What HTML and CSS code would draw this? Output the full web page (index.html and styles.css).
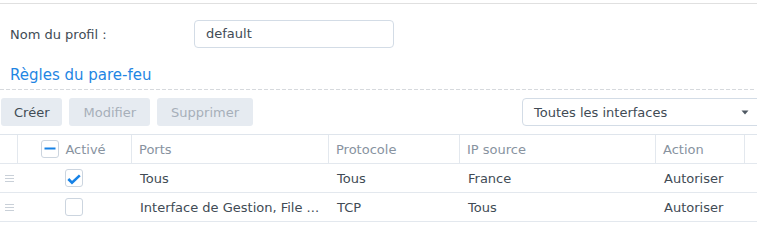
FILE: index.html
```html
<!DOCTYPE html>
<html lang="fr">
<head>
<meta charset="utf-8">
<title>Pare-feu</title>
<link rel="stylesheet" href="styles.css">
</head>
<body>
<div class="topline"></div>
<div class="form-row">
  <label class="form-label" for="profil">Nom du profil :</label>
  <div class="text-input" id="profil">default</div>
</div>
<h2 class="section-title">Règles du pare-feu</h2>
<div class="dashed"></div>
<div class="toolbar">
  <button class="btn">Créer</button>
  <button class="btn disabled">Modifier</button>
  <button class="btn disabled">Supprimer</button>
  <div class="select">
    <span>Toutes les interfaces</span>
    <svg class="caret" width="8" height="5" viewBox="0 0 8 5"><path d="M0.5 0.5 H7.5 L4 4.5 Z" fill="#4f5963"/></svg>
  </div>
</div>
<div class="grid">
  <div class="row head">
    <div class="cell c-handle"></div>
    <div class="cell c-check sep">
      <span class="checkbox">
        <svg width="18" height="18" viewBox="0 0 18 18"><rect x="3.5" y="7.5" width="11" height="2" fill="#1682e6"/></svg>
      </span>
      <span>Activé</span>
    </div>
    <div class="cell sep">Ports</div>
    <div class="cell sep">Protocole</div>
    <div class="cell sep">IP source</div>
    <div class="cell sep">Action</div>
    <div class="cell sep"></div>
  </div>
  <div class="row">
    <div class="cell c-handle"><svg width="9" height="7" viewBox="0 0 9 7"><rect x="0" y="0" width="9" height="1" fill="#c9d0d8"/><rect x="0" y="3" width="9" height="1" fill="#c9d0d8"/><rect x="0" y="6" width="9" height="1" fill="#c9d0d8"/></svg></div>
    <div class="cell c-check">
      <span class="checkbox">
        <svg width="18" height="18" viewBox="0 0 18 18"><path d="M3.3 10 L7 13.6 L14.8 6.4" fill="none" stroke="#1682e6" stroke-width="2.6" stroke-linejoin="miter"/></svg>
      </span>
    </div>
    <div class="cell">Tous</div>
    <div class="cell">Tous</div>
    <div class="cell">France</div>
    <div class="cell">Autoriser</div>
    <div class="cell"></div>
  </div>
  <div class="row">
    <div class="cell c-handle"><svg width="9" height="7" viewBox="0 0 9 7"><rect x="0" y="0" width="9" height="1" fill="#c9d0d8"/><rect x="0" y="3" width="9" height="1" fill="#c9d0d8"/><rect x="0" y="6" width="9" height="1" fill="#c9d0d8"/></svg></div>
    <div class="cell c-check">
      <span class="checkbox"></span>
    </div>
    <div class="cell">Interface de Gestion, File ...</div>
    <div class="cell">TCP</div>
    <div class="cell">Tous</div>
    <div class="cell">Autoriser</div>
    <div class="cell"></div>
  </div>
</div>
</body>
</html>
```

FILE: styles.css
```css
html, body {
  margin: 0;
  padding: 0;
  background: #ffffff;
  overflow: hidden;
}
body {
  font-family: "DejaVu Sans", Verdana, sans-serif;
  font-size: 13px;
  color: #414b55;
  width: 757px;
}
.topline {
  margin-top: 3px;
  height: 1px;
  background: #e0e0e0;
}
.form-row {
  display: flex;
  align-items: center;
  margin-top: 16px;
  padding-left: 10px;
  height: 28px;
}
.form-label {
  width: 184px;
  height: 28px;
  line-height: 30px;
}
.text-input {
  box-sizing: border-box;
  width: 200px;
  height: 28px;
  line-height: 26px;
  border: 1px solid #d3dce6;
  border-radius: 4px;
  padding-left: 11px;
}
.section-title {
  margin: 17px 0 0 0;
  padding-left: 10px;
  font-size: 15px;
  font-weight: normal;
  line-height: 20px;
  color: #1f86e3;
}
.dashed {
  margin-top: 4px;
  width: 755px;
  height: 1px;
  background: repeating-linear-gradient(to right, #d6d9dd 0 4px, transparent 4px 6px);
}
.toolbar {
  display: flex;
  gap: 7px;
  margin-top: 8px;
  padding-left: 1px;
  width: 761px;
  height: 28px;
}
.btn {
  font: inherit;
  color: #414b55;
  background: #e6ebf1;
  border: none;
  border-radius: 3px;
  height: 28px;
  padding: 0 13px;
}
.btn.disabled {
  color: #a6afb9;
  padding: 0 14px;
}
.select {
  margin-left: auto;
  box-sizing: border-box;
  width: 240px;
  height: 28px;
  border: 1px solid #d3dce6;
  border-radius: 4px;
  padding: 0 12px 0 11px;
  display: flex;
  align-items: center;
  justify-content: space-between;
}
.caret {
  display: block;
}
.grid {
  margin-top: 8px;
  border-top: 1px solid #dfe5ec;
}
.row {
  display: grid;
  grid-template-columns: 17px 114px 197px 131px 196px 89px 13px;
  height: 28px;
  border-bottom: 1px solid #e3e8ee;
}
.cell {
  line-height: 29px;
  height: 28px;
  padding-left: 9px;
  white-space: nowrap;
  overflow: hidden;
}
.head .cell {
  color: #88939f;
  padding-left: 7px;
}
.head .cell.sep {
  border-left: 1px solid #e3e8ee;
}
.cell.c-handle {
  padding: 0 0 0 5px;
  display: flex;
  align-items: center;
}
.cell.c-check,
.head .cell.c-check {
  padding: 0;
  display: flex;
  align-items: center;
  justify-content: center;
  gap: 6px;
}
.head .cell.c-check {
  padding-right: 2px;
}
.checkbox {
  box-sizing: border-box;
  width: 18px;
  height: 18px;
  border: 1px solid #ccd5df;
  border-radius: 3px;
  position: relative;
  flex: none;
  background: #fff;
}
.checkbox svg {
  position: absolute;
  left: -1px;
  top: -1px;
}
```
